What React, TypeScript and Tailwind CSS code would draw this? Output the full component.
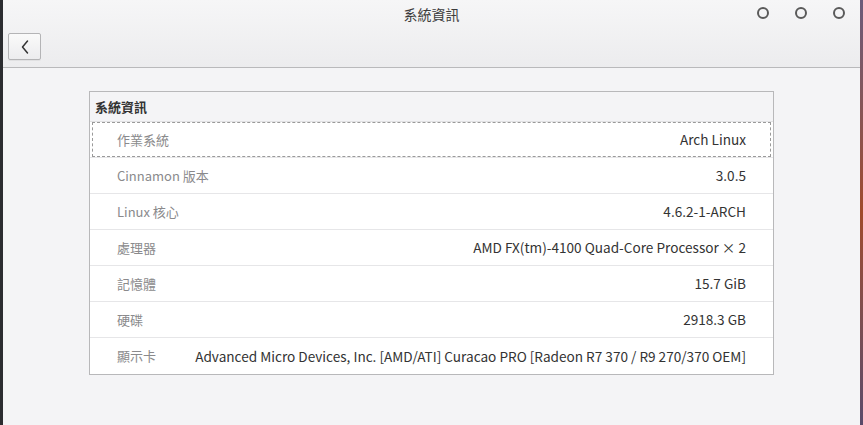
const rows = [
    { label: '作業系統', value: 'Arch Linux' },
    { label: 'Cinnamon 版本', value: '3.0.5' },
    { label: 'Linux 核心', value: '4.6.2-1-ARCH' },
    { label: '處理器', value: 'AMD FX(tm)-4100 Quad-Core Processor × 2' },
    { label: '記憶體', value: '15.7 GiB' },
    { label: '硬碟', value: '2918.3 GB' },
    { label: '顯示卡', value: 'Advanced Micro Devices, Inc. [AMD/ATI] Curacao PRO [Radeon R7 370 / R9 270/370 OEM]' },
];

function WindowButton() {
    return <span className="block w-[12px] h-[12px] rounded-full border-2 border-[#5a5a5a]" />;
}

export default function App() {
    return (
        <div
            className="w-[863px] h-[425px] flex bg-[#2a2a2c] overflow-hidden"
            style={{ fontFamily: '"Noto Sans CJK TC", "Noto Sans", sans-serif' }}
        >
            <div className="w-[3px] bg-[#2b2c30]" />
            <div className="flex-1 flex flex-col bg-[#f4f4f6]">
                {/* Title bar + toolbar */}
                <div className="h-[68px] shrink-0 flex flex-col bg-gradient-to-b from-[#f6f6f7] to-[#ececee] border-b border-[#b9b9bb]">
                    <div className="h-[28px] relative flex items-center justify-center">
                        <span className="text-[14px] text-[#3c3c3c]">系統資訊</span>
                        <div className="absolute right-[15px] top-[7px] flex gap-[26px]">
                            <WindowButton />
                            <WindowButton />
                            <WindowButton />
                        </div>
                    </div>
                    <div className="pl-[5px] pt-[5px]">
                        <button className="w-[33px] h-[27px] flex items-center justify-center rounded-[2px] border border-[#b4b4b6] bg-gradient-to-b from-[#fafafa] to-[#ececee] shadow-[0_1px_0_rgba(0,0,0,0.05)]">
                            <svg width="10" height="16" viewBox="0 0 10 16" fill="none">
                                <path d="M7.5 2 L2.5 8 L7.5 14" stroke="#333" strokeWidth="1.5" strokeLinecap="round" strokeLinejoin="round" />
                            </svg>
                        </button>
                    </div>
                </div>

                {/* Content */}
                <div className="flex-1 pt-[23px] pl-[86px]">
                    <div className="w-[685px] border border-[#b8b8ba] bg-white">
                        <div className="h-[30px] flex items-center px-[5px] bg-[#f4f4f6] border-b border-[#e2e2e4]">
                            <span className="text-[13px] font-bold text-[#333]">系統資訊</span>
                        </div>
                        {rows.map((row, i) => (
                            <div
                                key={row.label}
                                className={`h-[36px] flex items-center ${i < rows.length - 1 ? 'border-b border-[#e6e6e8]' : ''}`}
                            >
                                <div
                                    className={`flex-1 h-full flex items-center justify-between pl-[24px] pr-[24px] mx-[2px] ${
                                        i === 0 ? 'border border-dashed border-[#9a9a9a] my-[1px] h-[32px]' : 'border border-transparent'
                                    }`}
                                >
                                    <span className="text-[13px] text-[#8a8a8c] whitespace-nowrap">{row.label}</span>
                                    <span className="text-[13.6px] text-[#333] whitespace-nowrap">{row.value}</span>
                                </div>
                            </div>
                        ))}
                    </div>
                </div>
            </div>
            <div className="w-[3px] bg-gradient-to-b from-[#6a5a7a] via-[#a04a2a] to-[#5a4a6a]" />
        </div>
    );
}
